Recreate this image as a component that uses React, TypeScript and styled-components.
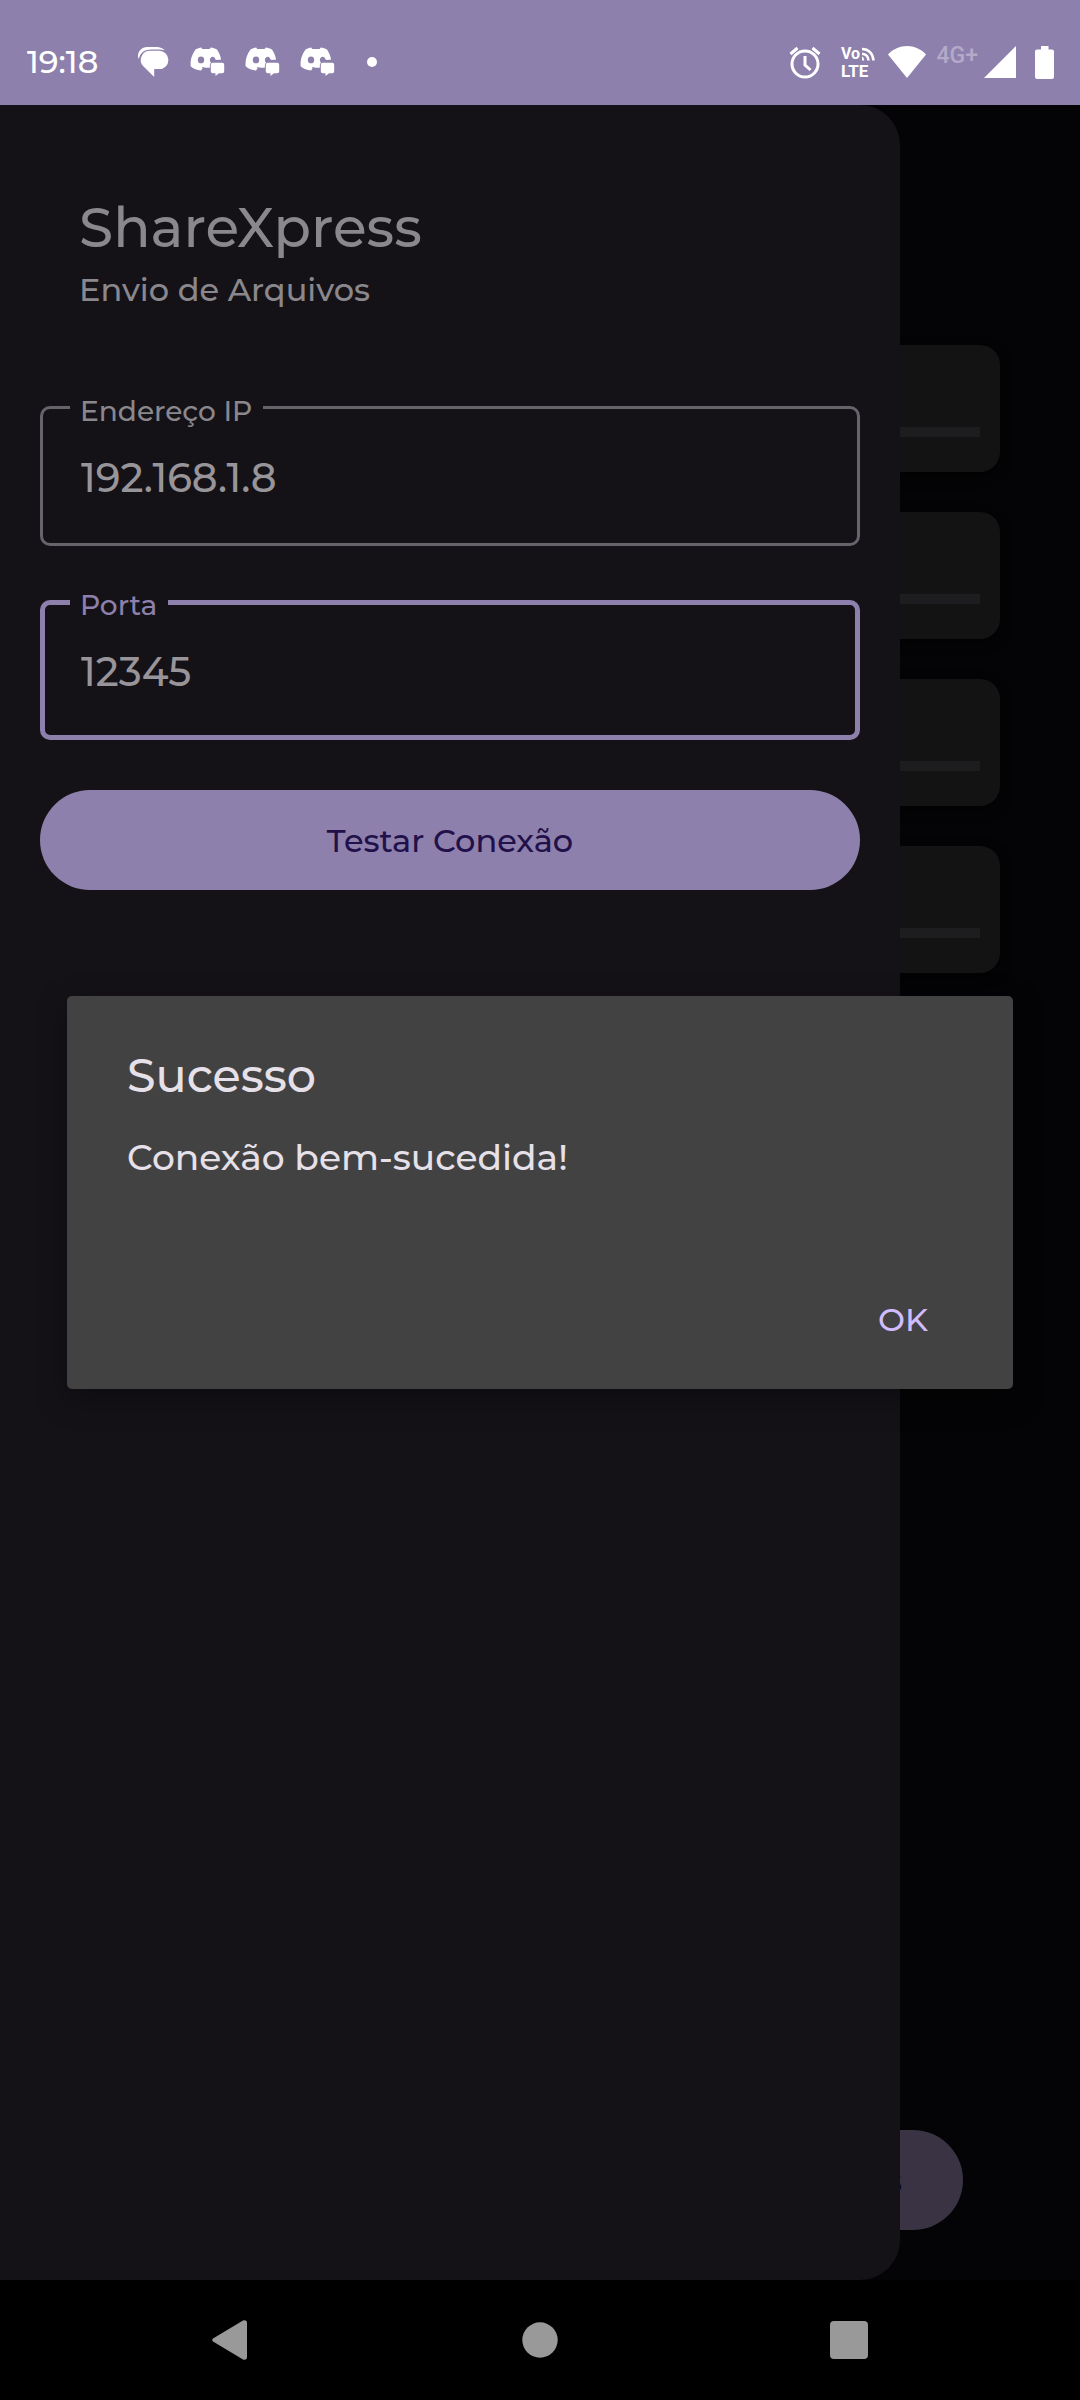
import React from "react";
import styled, { createGlobalStyle } from "styled-components";

const color = {
  accent: "#8e80ac",
  onAccent: "#21104a",
  page: "#040406",
  drawer: "#141217",
  card: "#131313",
  track: "#1d1d1f",
  outline: "#66646a",
  muted: "#8a878d",
  value: "#98959a",
  dialog: "#424242",
  onDialog: "#e6e0e9",
  link: "#d0bcff",
  fab: "#393344",
  navIcon: "#999999",
};

const GlobalStyle = createGlobalStyle`
  *, *::before, *::after { box-sizing: border-box; }
  body {
    margin: 0;
    background: #000;
    font-family: Montserrat, Inter, "Liberation Sans", sans-serif;
    font-weight: 500;
  }
  h1, h2, p { margin: 0; font-weight: 500; }
  button, input { font: inherit; }
  button { border: 0; cursor: pointer; }
`;

const Screen = styled.div`
  display: grid;
  grid-template-rows: 105px 1fr 120px;
  min-height: 100vh;
`;

const StatusBar = styled.header`
  display: flex;
  align-items: center;
  justify-content: space-between;
  padding: 19px 26px 0 27px;
  background: ${color.accent};
  color: #fff;
`;

const StatusGroup = styled.div<{ $gap: number }>`
  display: flex;
  align-items: center;
  gap: ${(p) => p.$gap}px;
  svg { display: block; overflow: visible; }
`;

const Clock = styled.time`
  margin-right: 20px;
  font-size: 32px;
  line-height: 40px;
`;

const Network = styled.div`
  display: flex;
  align-items: flex-start;
  gap: 6px;
`;

const NetworkType = styled.span`
  font: 500 23px/20px Roboto, sans-serif;
  color: #b3a9c8;
`;

const Stage = styled.main`
  display: grid;
  grid-template: minmax(0, 1fr) / minmax(0, 1fr);
  background: ${color.page};
  > * { grid-area: 1 / 1; }
`;

const Transfers = styled.section`
  display: flex;
  flex-direction: column;
  justify-content: space-between;
  padding: 240px 80px 50px;
`;

const CardList = styled.div`
  display: grid;
  gap: 40px;
`;

const Card = styled.div`
  padding: 82px 20px 35px;
  border-radius: 20px;
  background: ${color.card};
  box-shadow: 0 4px 12px rgba(0, 0, 0, 0.6);
`;

const Track = styled.div`
  height: 10px;
  background: ${color.track};
`;

const SendButton = styled.button`
  height: 100px;
  margin: 0 37px;
  padding: 0 61px;
  border-radius: 50px;
  background: ${color.fab};
  color: #0d0620;
  font-size: 32px;
  text-align: right;
`;

const Drawer = styled.aside`
  z-index: 1;
  display: flex;
  flex-direction: column;
  margin-right: 180px;
  padding: 86px 40px 0;
  border-radius: 0 40px 40px 0;
  background: ${color.drawer};
  color: ${color.muted};
`;

const Brand = styled.div`
  padding: 0 39px;
  margin-bottom: 91px;
`;

const Title = styled.h1`
  font-size: 55px;
  line-height: 74px;
`;

const Subtitle = styled.p`
  font-size: 32px;
  line-height: 50px;
`;

const Field = styled.div<{ $active?: boolean }>`
  position: relative;
  display: flex;
  height: 140px;
  margin-bottom: ${(p) => (p.$active ? 50 : 54)}px;
  border: ${(p) => (p.$active ? `5px solid ${color.accent}` : `3px solid ${color.outline}`)};
  border-radius: 10px;
  padding: 0 ${(p) => (p.$active ? 36 : 38)}px;
  color: ${(p) => (p.$active ? color.accent : color.muted)};
`;

const FieldLabel = styled.label<{ $active?: boolean }>`
  position: absolute;
  top: ${(p) => (p.$active ? -18 : -16)}px;
  left: ${(p) => (p.$active ? 25 : 27)}px;
  padding: 0 11px 0 10px;
  background: ${color.drawer};
  font-size: 28px;
  line-height: 36px;
`;

const FieldInput = styled.input`
  width: 100%;
  padding: 2px 0 0;
  border: 0;
  outline: 0;
  background: transparent;
  color: ${color.value};
  font-size: 40px;
`;

const TestButton = styled.button`
  height: 100px;
  border-radius: 50px;
  background: ${color.accent};
  color: ${color.onAccent};
  font-size: 32px;
`;

const Dialog = styled.section`
  z-index: 2;
  align-self: center;
  margin: 0 67px;
  padding: 50px 60px 25px;
  border-radius: 5px;
  background: ${color.dialog};
  color: ${color.onDialog};
  box-shadow: 0 10px 30px rgba(0, 0, 0, 0.35);
`;

const DialogTitle = styled.h2`
  font-size: 46px;
  line-height: 60px;
`;

const DialogText = styled.p`
  margin: 25px 0 91px;
  font-size: 36px;
  line-height: 52px;
`;

const DialogActions = styled.div`
  display: flex;
  justify-content: flex-end;
`;

const DialogButton = styled.button`
  height: 90px;
  padding: 0 25px;
  background: transparent;
  color: ${color.link};
  font-size: 32px;
`;

const NavBar = styled.nav`
  display: flex;
  align-items: center;
  justify-content: center;
  gap: 271px;
  background: #000;
`;

const NavButton = styled.button`
  display: block;
  padding: 0;
  background: transparent;
  svg { display: block; }
`;

const ChatIcon = () => (
  <svg width="32" height="30" viewBox="0 0 32 30" fill="#fff">
    <path d="M.9 12C.2 11 0 10 0 9C0 4 4 0 9 0H18.500C22 0 25 1.400 26.800 3.200C25 2.800 23 2.500 21 2.500H13C7 2.500 2 5.500.900 12z" />
    <path d="M12.200 3.700H21.200a9.200 9.200 0 0 1 0 18.400H16.200V30L5.300 19.200A9.200 9.200 0 0 1 12.200 3.700z" />
  </svg>
);

const DiscordIcon = () => (
  <svg width="35" height="30" viewBox="0 0 35 30" fill="#fff">
    <path
      fillRule="evenodd"
      d="M5.500 2.400C7.600 1.200 9.500.600 11.200.400L12.200 2.100H19.600L20.800.400C23 .600 25 1.300 27 2.400C29.400 6 30.700 9.300 31 12.800C28.500 12.800 27 13 25.600 12.800C25 10.300 23.400 9.400 21.800 10C19.500 10.800 19.400 14.200 21 15.600C20 16.800 19.800 18 19.800 20.800H16C14 20.600 12.800 20.300 11.900 20.300L12.500 21.600L11 23.600C7 23 3.500 21.700.600 19.200C.100 13 1.700 7.500 5.500 2.400ZM11 9.500A3.200 3.400 0 1 0 11 16.300A3.200 3.400 0 1 0 11 9.500Z"
    />
    <path d="M22.800 15.700H32.200Q34.200 15.700 34.200 17.700V24.200Q34.200 26.200 32.200 26.200H29L25.500 29V26.200H22.800Q20.800 26.200 20.800 24.200V17.700Q20.800 15.700 22.800 15.700Z" />
  </svg>
);

const MoreDot = () => (
  <svg width="34" height="30" viewBox="0 0 34 30" fill="#fff">
    <circle cx="17" cy="15" r="5" />
  </svg>
);

const AlarmIcon = () => (
  <svg width="32" height="33" viewBox="0 0 32 33" fill="none" stroke="#fff" strokeWidth="3">
    <circle cx="16" cy="18" r="13" />
    <path d="M16 10v9l5.500 5M1.500 8l7-6M30.500 8l-7-6" />
  </svg>
);

const VolteIcon = () => (
  <svg width="38" height="36" viewBox="0 0 38 36" fill="#fff">
    <text x="1" y="15" fontFamily="Roboto, sans-serif" fontWeight="700" fontSize="16">Vo</text>
    <text x="1" y="33" fontFamily="Roboto, sans-serif" fontWeight="700" fontSize="17">LTE</text>
    <path
      d="M22 5C28.500 5 33 9.500 33.500 16.500M22 9.700C26 10 28.200 12.500 28.500 16.500"
      fill="none"
      stroke="#fff"
      strokeWidth="2.500"
    />
    <path d="M22 12.500c1.500.5 2 2 2.200 4H22z" />
  </svg>
);

const WifiIcon = () => (
  <svg width="38" height="32" viewBox="0 0 38 32" fill="#fff">
    <path d="M19 32L0 8.500C5 3 12 0 19 0s14 3 19 8.500z" />
  </svg>
);

const SignalIcon = () => (
  <svg width="32" height="32" viewBox="0 0 32 32" fill="#fff">
    <path d="M0 32L32 0V32z" />
  </svg>
);

const BatteryIcon = () => (
  <svg width="19" height="33" viewBox="0 0 19 33" fill="#fff">
    <path d="M6 0h7.500v3.500H17a2 2 0 0 1 2 2V31a2 2 0 0 1-2 2H2a2 2 0 0 1-2-2V5.500a2 2 0 0 1 2-2h4z" />
  </svg>
);

interface FieldProps {
  id: string;
  label: string;
  value: string;
  active?: boolean;
}

const TextField = ({ id, label, value, active }: FieldProps) => (
  <Field $active={active}>
    <FieldLabel htmlFor={id} $active={active}>{label}</FieldLabel>
    <FieldInput id={id} type="text" defaultValue={value} />
  </Field>
);

export default function App() {
  return (
    <>
      <GlobalStyle />
      <Screen>
        <StatusBar>
          <StatusGroup $gap={20}>
            <Clock>19:18</Clock>
            <ChatIcon />
            <DiscordIcon />
            <DiscordIcon />
            <DiscordIcon />
            <MoreDot />
          </StatusGroup>
          <StatusGroup $gap={19}>
            <AlarmIcon />
            <StatusGroup $gap={10}>
              <VolteIcon />
              <WifiIcon />
              <Network>
                <NetworkType>4G+</NetworkType>
                <SignalIcon />
              </Network>
            </StatusGroup>
            <BatteryIcon />
          </StatusGroup>
        </StatusBar>

        <Stage>
          <Transfers>
            <CardList>
              {[0, 1, 2, 3].map((n) => (
                <Card key={n}>
                  <Track />
                </Card>
              ))}
            </CardList>
            <SendButton type="button">Arquivos</SendButton>
          </Transfers>

          <Drawer>
            <Brand>
              <Title>ShareXpress</Title>
              <Subtitle>Envio de Arquivos</Subtitle>
            </Brand>
            <TextField id="ip" label="Endereço IP" value="192.168.1.8" />
            <TextField id="port" label="Porta" value="12345" active />
            <TestButton type="button">Testar Conexão</TestButton>
          </Drawer>

          <Dialog role="alertdialog" aria-labelledby="dialog-title">
            <DialogTitle id="dialog-title">Sucesso</DialogTitle>
            <DialogText>Conexão bem-sucedida!</DialogText>
            <DialogActions>
              <DialogButton type="button">OK</DialogButton>
            </DialogActions>
          </Dialog>
        </Stage>

        <NavBar>
          <NavButton type="button" aria-label="Voltar">
            <svg width="38" height="40" viewBox="0 0 38 40" fill={color.navIcon}>
              <path d="M1 18.500L31 .500Q35 -.500 35 3V37Q35 40.500 31 39.500L1 21.500Q-.500 20 1 18.500z" />
            </svg>
          </NavButton>
          <NavButton type="button" aria-label="Início">
            <svg width="38" height="38" viewBox="0 0 38 38" fill={color.navIcon}>
              <circle cx="19" cy="19" r="17.700" />
            </svg>
          </NavButton>
          <NavButton type="button" aria-label="Recentes">
            <svg width="38" height="38" viewBox="0 0 38 38" fill={color.navIcon}>
              <rect width="38" height="38" rx="4" />
            </svg>
          </NavButton>
        </NavBar>
      </Screen>
    </>
  );
}
